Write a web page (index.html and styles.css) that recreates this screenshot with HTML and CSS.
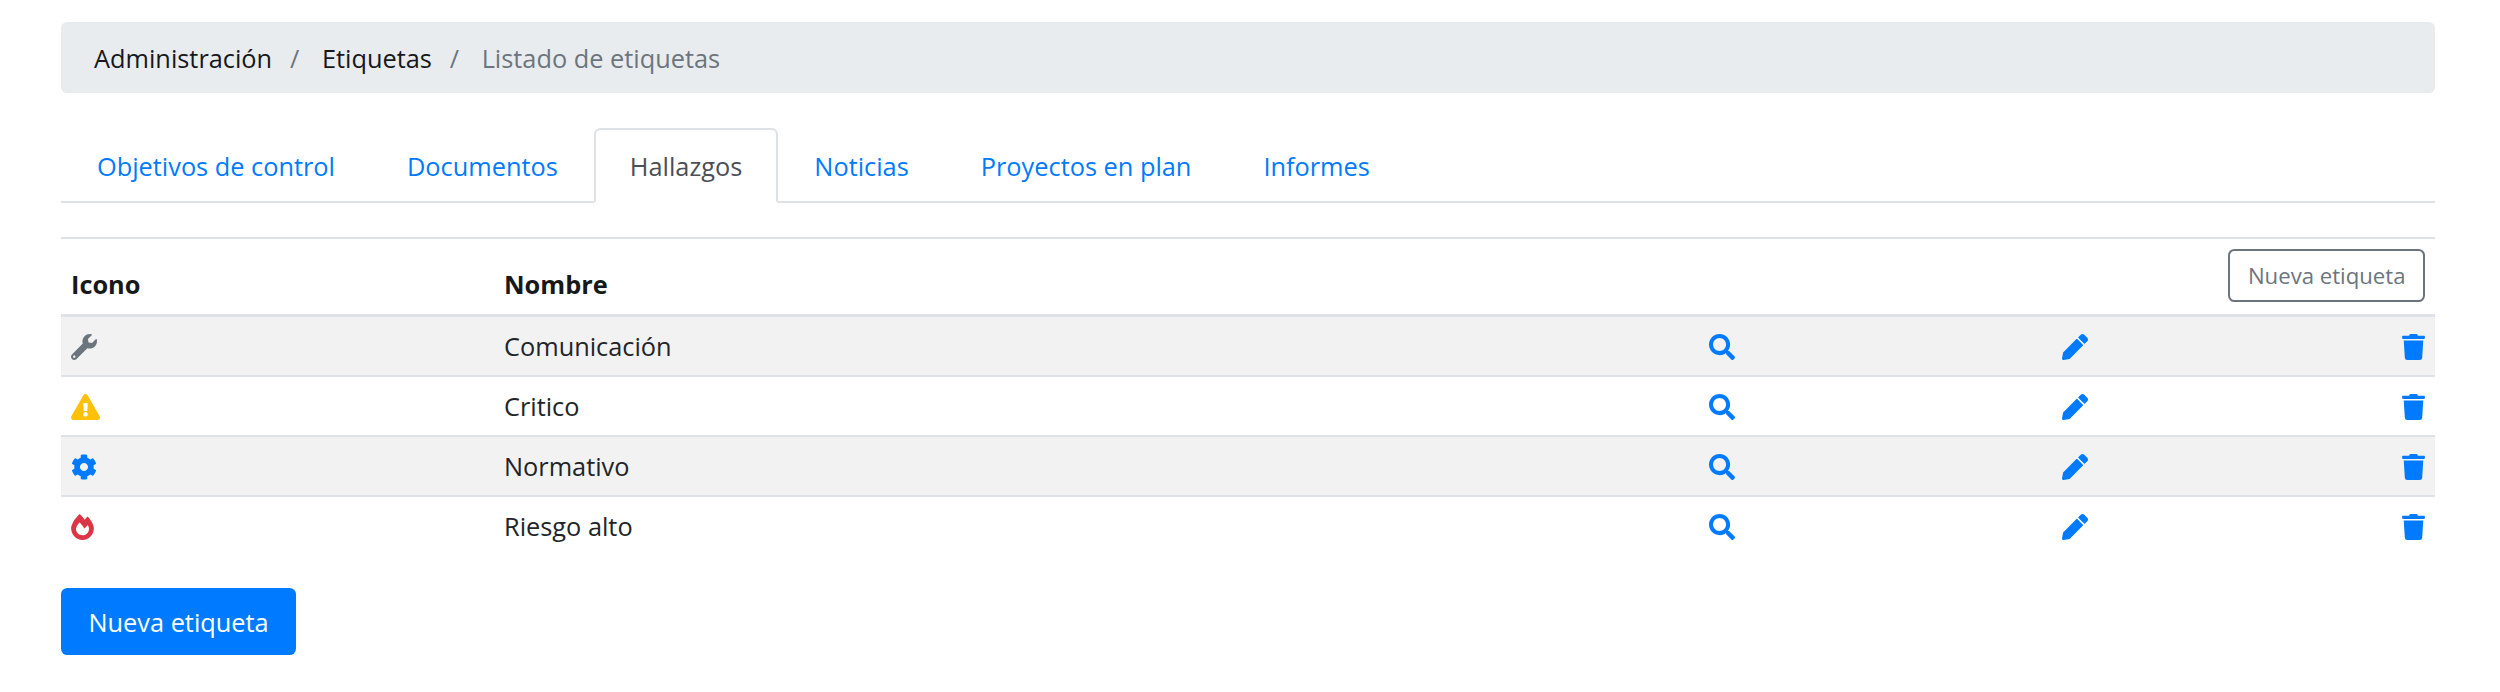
FILE: index.html
```html
<!DOCTYPE html>
<html lang="es">
<head>
    <meta charset="UTF-8">
    <title>Listado de etiquetas</title>
    <link rel="stylesheet" href="styles.css">
</head>
<body>
    <svg class="icon-defs" aria-hidden="true">
        <symbol id="i-wrench" viewBox="0 0 512 512"><path d="M507.73 109.1c-2.24-9.03-13.54-12.09-20.12-5.51l-74.36 74.36-67.88-11.31-11.31-67.88 74.36-74.36c6.62-6.62 3.43-17.9-5.66-20.16-47.38-11.74-99.55.91-136.58 37.93-39.64 39.64-50.55 97.1-34.05 147.2L18.74 402.76c-24.99 24.99-24.99 65.51 0 90.5 24.99 24.99 65.51 24.99 90.5 0l213.21-213.21c50.12 16.71 107.47 5.68 147.37-34.22 37.07-37.07 49.7-89.32 37.91-136.73zM64 472c-13.25 0-24-10.75-24-24 0-13.26 10.75-24 24-24s24 10.74 24 24c0 13.25-10.75 24-24 24z"/></symbol>
        <symbol id="i-warning" viewBox="0 0 576 512"><path d="M569.517 440.013C587.975 472.007 564.806 512 527.94 512H48.054c-36.937 0-59.999-40.055-41.577-71.987L246.423 23.985c18.467-32.009 64.72-31.951 83.154 0l239.94 416.028zM288 354c-25.405 0-46 20.595-46 46s20.595 46 46 46 46-20.595 46-46-20.595-46-46-46zm-43.673-165.346l7.418 136c.347 6.364 5.609 11.346 11.982 11.346h48.546c6.373 0 11.635-4.982 11.982-11.346l7.418-136c.375-6.874-5.098-12.654-11.982-12.654h-63.383c-6.884 0-12.356 5.78-11.981 12.654z"/></symbol>
        <symbol id="i-cog" viewBox="0 0 512 512"><path d="M487.4 315.7l-42.6-24.6c4.3-23.2 4.3-47 0-70.2l42.6-24.6c4.9-2.8 7.1-8.6 5.5-14-11.1-35.6-30-67.8-54.7-94.6-3.8-4.1-10-5.1-14.8-2.3L380.8 110c-17.9-15.4-38.5-27.3-60.8-35.1V25.8c0-5.6-3.9-10.5-9.4-11.7-36.7-8.2-74.3-7.8-109.2 0-5.5 1.2-9.4 6.1-9.4 11.7V75c-22.2 7.9-42.8 19.8-60.8 35.1L88.7 85.5c-4.9-2.8-11-1.9-14.8 2.3-24.7 26.7-43.6 58.9-54.7 94.6-1.7 5.4.6 11.2 5.5 14L67.3 221c-4.3 23.2-4.3 47 0 70.2l-42.6 24.6c-4.9 2.8-7.1 8.6-5.5 14 11.1 35.6 30 67.8 54.7 94.6 3.8 4.1 10 5.1 14.8 2.3l42.6-24.6c17.9 15.4 38.5 27.3 60.8 35.1v49.2c0 5.6 3.9 10.5 9.4 11.7 36.7 8.2 74.3 7.8 109.2 0 5.5-1.2 9.4-6.1 9.4-11.7v-49.2c22.2-7.9 42.8-19.8 60.8-35.1l42.6 24.6c4.9 2.8 11 1.9 14.8-2.3 24.7-26.7 43.6-58.9 54.7-94.6 1.5-5.5-.7-11.3-5.6-14.1zM256 336c-44.1 0-80-35.9-80-80s35.9-80 80-80 80 35.9 80 80-35.9 80-80 80z"/></symbol>
        <symbol id="i-fire" viewBox="0 0 448 512"><path d="M323.56 51.2c-20.8 19.3-39.58 39.59-56.22 59.97C240.08 73.62 206.28 35.53 168 0 69.74 91.17 0 209.96 0 281.6 0 408.85 100.29 512 224 512s224-103.15 224-230.4c0-53.27-51.98-163.14-124.44-230.4zm-19.47 340.65C282.43 407.01 255.72 416 226.86 416 154.71 416 96 368.26 96 290.75c0-38.61 24.31-72.63 72.79-130.75 6.93 7.98 98.83 125.34 98.83 125.34l58.63-66.88c4.14 6.85 7.91 13.55 11.27 19.97 27.35 52.19 15.81 118.97-33.43 153.42z"/></symbol>
        <symbol id="i-search" viewBox="0 0 512 512"><path d="M505 442.7L405.3 343c-4.5-4.5-10.6-7-17-7H372c27.6-35.3 44-79.7 44-128C416 93.1 322.9 0 208 0S0 93.1 0 208s93.1 208 208 208c48.3 0 92.7-16.4 128-44v16.3c0 6.4 2.5 12.5 7 17l99.7 99.7c9.4 9.4 24.6 9.4 33.9 0l28.3-28.3c9.4-9.4 9.4-24.6.1-34zM208 336c-70.7 0-128-57.2-128-128 0-70.7 57.2-128 128-128 70.7 0 128 57.2 128 128 0 70.7-57.2 128-128 128z"/></symbol>
        <symbol id="i-pencil" viewBox="0 0 512 512"><path d="M497.9 142.1l-46.1 46.1c-4.7 4.7-12.3 4.7-17 0l-111-111c-4.7-4.7-4.7-12.3 0-17l46.1-46.1c18.7-18.7 49.1-18.7 67.9 0l60.1 60.1c18.8 18.7 18.8 49.1 0 67.9zM284.2 99.8L21.6 362.4.4 483.9c-2.9 16.4 11.4 30.6 27.8 27.8l121.5-21.3 262.6-262.6c4.7-4.7 4.7-12.3 0-17l-111-111c-4.8-4.7-12.4-4.7-17.1 0z"/></symbol>
        <symbol id="i-trash" viewBox="0 0 448 512"><path d="M432 32H312l-9.4-18.7A24 24 0 0 0 281.1 0H166.8a23.72 23.72 0 0 0-21.4 13.3L136 32H16A16 16 0 0 0 0 48v32a16 16 0 0 0 16 16h416a16 16 0 0 0 16-16V48a16 16 0 0 0-16-16zM53.2 467a48 48 0 0 0 47.9 45h245.8a48 48 0 0 0 47.9-45L416 128H32z"/></symbol>
    </svg>

    <nav class="breadcrumb">
        <a href="#">Administración</a>
        <span class="sep">/</span>
        <a href="#">Etiquetas</a>
        <span class="sep">/</span>
        <span class="current">Listado de etiquetas</span>
    </nav>

    <ul class="tabs">
        <li><a href="#">Objetivos de control</a></li>
        <li><a href="#">Documentos</a></li>
        <li><a href="#" class="active">Hallazgos</a></li>
        <li><a href="#">Noticias</a></li>
        <li><a href="#">Proyectos en plan</a></li>
        <li><a href="#">Informes</a></li>
    </ul>

    <table class="tags">
        <colgroup>
            <col class="col-icon">
            <col class="col-name">
            <col class="col-view">
            <col class="col-edit">
            <col>
        </colgroup>
        <thead>
            <tr>
                <th>Icono</th>
                <th>Nombre</th>
                <th></th>
                <th></th>
                <th class="right"><a href="#" class="btn btn-outline">Nueva etiqueta</a></th>
            </tr>
        </thead>
        <tbody>
            <tr>
                <td><svg class="icon grey"><use href="#i-wrench"/></svg></td>
                <td>Comunicación</td>
                <td><svg class="icon blue"><use href="#i-search"/></svg></td>
                <td><svg class="icon blue"><use href="#i-pencil"/></svg></td>
                <td class="right"><svg class="icon icon-trash blue"><use href="#i-trash"/></svg></td>
            </tr>
            <tr>
                <td><svg class="icon icon-wide yellow"><use href="#i-warning"/></svg></td>
                <td>Critico</td>
                <td><svg class="icon blue"><use href="#i-search"/></svg></td>
                <td><svg class="icon blue"><use href="#i-pencil"/></svg></td>
                <td class="right"><svg class="icon icon-trash blue"><use href="#i-trash"/></svg></td>
            </tr>
            <tr>
                <td><svg class="icon blue"><use href="#i-cog"/></svg></td>
                <td>Normativo</td>
                <td><svg class="icon blue"><use href="#i-search"/></svg></td>
                <td><svg class="icon blue"><use href="#i-pencil"/></svg></td>
                <td class="right"><svg class="icon icon-trash blue"><use href="#i-trash"/></svg></td>
            </tr>
            <tr>
                <td><svg class="icon icon-fire red"><use href="#i-fire"/></svg></td>
                <td>Riesgo alto</td>
                <td><svg class="icon blue"><use href="#i-search"/></svg></td>
                <td><svg class="icon blue"><use href="#i-pencil"/></svg></td>
                <td class="right"><svg class="icon icon-trash blue"><use href="#i-trash"/></svg></td>
            </tr>
        </tbody>
    </table>

    <a href="#" class="btn btn-primary">Nueva etiqueta</a>
</body>
</html>
```

FILE: styles.css
```css
body {
    margin: 0;
    padding: 22px 65px 0 61px;
    font-family: "Open Sans", "Noto Sans", sans-serif;
    font-size: 25.33px;
    line-height: 38px;
    color: #212529;
    background: #fff;
}
a {
    text-decoration: none;
}
.icon-defs {
    display: none;
}
.breadcrumb {
    display: flex;
    padding: 17px 33px 16px;
    background: #e9ecef;
    border-radius: 6.4px;
}
.breadcrumb a {
    color: #16181b;
}
.breadcrumb .sep {
    margin: 0 22.5px 0 18px;
    color: #6c757d;
}
.breadcrumb .current {
    color: #6c757d;
}
.tabs {
    display: flex;
    margin: 35px 0 34px;
    padding: 0;
    list-style: none;
    border-bottom: 2px solid #dee2e6;
}
.tabs a {
    display: block;
    margin-bottom: -2px;
    padding: 17px 34px 16px;
    color: #007bff;
    border: 2px solid transparent;
    border-radius: 6.4px 6.4px 0 0;
}
.tabs a.active {
    color: #495057;
    background: #fff;
    border-color: #dee2e6 #dee2e6 #fff;
}
.tags {
    width: 100%;
    table-layout: fixed;
    border-collapse: collapse;
    margin-bottom: 33.5px;
}
.col-icon {
    width: 433px;
}
.col-name {
    width: 1205px;
}
.col-view {
    width: 353px;
}
.col-edit {
    width: 150px;
}
.tags th,
.tags td {
    padding: 10px;
    text-align: left;
    vertical-align: middle;
}
.tags th {
    padding-bottom: 11px;
    color: #16181b;
    font-weight: 700;
    vertical-align: bottom;
    border-top: 2px solid #dee2e6;
    border-bottom: 3px solid #dee2e6;
}
.tags th.right {
    padding-bottom: 12px;
    text-align: right;
}
.tags td {
    border-top: 2px solid #dee2e6;
}
.tags tbody tr:first-child td {
    border-top: 0;
}
.tags tbody tr:nth-child(odd) {
    background: #f2f2f2;
}
.tags td.right {
    text-align: right;
}
.icon {
    display: inline-block;
    width: 26px;
    height: 26px;
    margin-top: -5px;
    vertical-align: middle;
    fill: currentColor;
}
.icon-wide {
    width: 29px;
}
.icon-trash {
    width: 23px;
}
.icon-fire {
    width: 23px;
}
.grey {
    color: #6c757d;
}
.blue {
    color: #007bff;
}
.yellow {
    color: #ffc107;
}
.red {
    color: #dc3545;
}
.btn {
    display: inline-block;
    border-radius: 6.4px;
    white-space: nowrap;
}
.btn-primary {
    padding: 15px 27.5px 14px;
    color: #fff;
    background: #007bff;
}
.btn-outline {
    padding: 7.7px 17.5px;
    font-size: 22.17px;
    font-weight: 400;
    line-height: 33.6px;
    color: #6c757d;
    border: 2px solid #6c757d;
    vertical-align: top;
}
```
